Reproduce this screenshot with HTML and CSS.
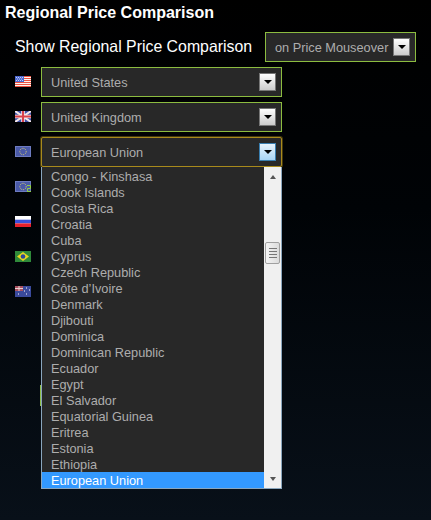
FILE: index.html
```html
<!DOCTYPE html>
<html lang="en">
<head>
    <meta charset="UTF-8">
    <title>Regional Price Comparison</title>
    <link rel="stylesheet" href="styles.css">
</head>
<body>
    <h1>Regional Price Comparison</h1>

    <div class="show-row">
        <span class="show-label">Show Regional Price Comparison</span>
        <div class="select select-mode">
            <span>on Price Mouseover</span>
            <span class="arrow-btn"><span class="arrow"></span></span>
        </div>
    </div>

    <div class="regions">
        <div class="region">
            <svg class="flag" viewBox="0 0 16 11">
                <rect width="16" height="11" fill="#fff4ee"/>
                <path d="M0 .5h16M0 2.500h16M0 4.500h16M0 6.500h16M0 8.500h16M0 10.500h16" stroke="#ee5240"/>
                <rect width="9" height="6" fill="#4c68d0"/>
                <path d="M1 1.500h1M3 1.500h1M5 1.500h1M7 1.500h1M2 3h1M4 3h1M6 3h1M1 4.500h1M3 4.500h1M5 4.500h1M7 4.500h1" stroke="#e6ecff" stroke-width=".8"/>
            </svg>
            <div class="select">
                <span>United States</span>
                <span class="arrow-btn"><span class="arrow"></span></span>
            </div>
        </div>
        <div class="region">
            <svg class="flag" viewBox="0 0 16 11">
                <rect width="16" height="11" fill="#3f4fa8"/>
                <path d="M0 0l16 11M16 0L0 11" stroke="#f4e6e6" stroke-width="2"/>
                <path d="M8 0v11M0 5.500h16" stroke="#f4e6e6" stroke-width="3.600"/>
                <path d="M8 0v11M0 5.500h16" stroke="#d8404a" stroke-width="2"/>
            </svg>
            <div class="select">
                <span>United Kingdom</span>
                <span class="arrow-btn"><span class="arrow"></span></span>
            </div>
        </div>
        <div class="region">
            <svg class="flag" viewBox="0 0 16 11">
                <rect width="16" height="11" fill="#4a5aa8"/>
                <rect x=".5" y=".5" width="15" height="10" fill="none" stroke="#6d7bc0"/>
                <circle cx="8" cy="5.500" r="3.200" fill="none" stroke="#d8d070" stroke-dasharray="1 .9"/>
            </svg>
            <div class="select select-open">
                <span>European Union</span>
                <span class="arrow-btn arrow-btn-open"><span class="arrow"></span></span>
            </div>
        </div>
        <div class="region">
            <svg class="flag" viewBox="0 0 16 11">
                <rect width="16" height="11" fill="#4a5aa8"/>
                <rect x=".5" y=".5" width="15" height="10" fill="none" stroke="#6d7bc0"/>
                <circle cx="8" cy="5.500" r="3.200" fill="none" stroke="#d8d070" stroke-dasharray="1 .9"/>
                <path d="M12 4.500h3.500v3h-3v3h3.500" fill="none" stroke="#8fd040"/>
            </svg>
        </div>
        <div class="region">
            <svg class="flag" viewBox="0 0 16 11">
                <rect width="16" height="11" fill="#fff"/>
                <rect y="3.700" width="16" height="3.700" fill="#3a50d8"/>
                <rect y="7.400" width="16" height="3.600" fill="#e8202a"/>
            </svg>
        </div>
        <div class="region">
            <svg class="flag" viewBox="0 0 16 11">
                <rect width="16" height="11" fill="#2f8a3a"/>
                <path d="M8 1l6 4.500-6 4.500-6-4.500z" fill="#e8d820"/>
                <circle cx="8" cy="5.500" r="2.300" fill="#2c4a9a"/>
            </svg>
        </div>
        <div class="region">
            <svg class="flag" viewBox="0 0 16 11">
                <rect width="16" height="11" fill="#3a4a9c"/>
                <rect width="8" height="5" fill="#a85060"/>
                <path d="M0 2.500h8M4 0v5" stroke="#e8d0d0"/>
                <path d="M3 8h1M11 2h1M14 4h1M11 8h1M9 5h1" stroke="#fff"/>
            </svg>
        </div>
    </div>
    <div class="apply-edge"></div>

    <div class="dropdown">
        <ul class="options">
            <li>Congo - Kinshasa</li>
            <li>Cook Islands</li>
            <li>Costa Rica</li>
            <li>Croatia</li>
            <li>Cuba</li>
            <li>Cyprus</li>
            <li>Czech Republic</li>
            <li>Côte d’Ivoire</li>
            <li>Denmark</li>
            <li>Djibouti</li>
            <li>Dominica</li>
            <li>Dominican Republic</li>
            <li>Ecuador</li>
            <li>Egypt</li>
            <li>El Salvador</li>
            <li>Equatorial Guinea</li>
            <li>Eritrea</li>
            <li>Estonia</li>
            <li>Ethiopia</li>
            <li class="selected">European Union</li>
        </ul>
        <div class="scrollbar">
            <span class="scroll-up"></span>
            <div class="scroll-thumb">
                <span></span><span></span><span></span><span></span>
            </div>
            <span class="scroll-down"></span>
        </div>
    </div>
</body>
</html>
```

FILE: styles.css
```css
html {
    height: 100%;
    background: linear-gradient(#000000, #000306 40%, #081019);
}
body {
    margin: 0;
    position: relative;
    height: 520px;
    overflow: hidden;
    font-family: "Liberation Sans", Arial, sans-serif;
}
h1 {
    margin: 0;
    padding: 4px 0 0 5px;
    height: 28px;
    box-sizing: border-box;
    font-size: 16px;
    line-height: 17px;
    font-weight: bold;
    color: #fff;
}
.show-row {
    display: flex;
    align-items: center;
    padding-left: 15px;
    height: 30px;
    margin-top: 4px;
}
.show-label {
    width: 250px;
    font-size: 15.870px;
    color: #fff;
}
.select {
    display: flex;
    align-items: center;
    justify-content: space-between;
    box-sizing: border-box;
    width: 241px;
    height: 30px;
    padding: 0 5px 0 9px;
    background: #282828;
    border: 1px solid #8cbc40;
    font-size: 12.750px;
    color: #adadad;
}
.select > span:first-child {
    padding-top: 1px;
}
.select-mode {
    width: 151px;
}
.select-open {
    border-color: #a88a1c;
    border-radius: 2px;
    box-shadow: 0 0 0 1px rgba(168, 138, 28, 0.4);
}
.arrow-btn {
    display: flex;
    align-items: center;
    justify-content: center;
    box-sizing: border-box;
    width: 17px;
    height: 18px;
    border: 1px solid #777;
    background: linear-gradient(#fff, #ccc);
}
.arrow-btn-open {
    border-color: #3a7fb0;
    background: linear-gradient(#e8f4fc, #a8d4f4);
}
.arrow {
    border-left: 4px solid transparent;
    border-right: 4px solid transparent;
    border-top: 4px solid #000;
}
.regions {
    display: flex;
    flex-direction: column;
    gap: 5px;
    margin-top: 5px;
    padding-left: 15px;
}
.region {
    display: flex;
    align-items: center;
    gap: 10px;
    height: 30px;
}
.flag {
    width: 16px;
    height: 11px;
    margin-bottom: 1px;
    flex: none;
}
.apply-edge {
    width: 1px;
    height: 21px;
    margin: 78px 0 0 40px;
    background: #8fc04a;
}
.dropdown {
    position: absolute;
    left: 41px;
    top: 167px;
    display: flex;
    box-sizing: border-box;
    width: 241px;
    height: 322px;
    padding-top: 1px;
    border: 1px solid #8aa6bd;
    border-top: 0;
    background: #282828;
}
.options {
    flex: 1;
    margin: 0;
    padding: 0;
    list-style: none;
    font-size: 12.750px;
    line-height: 17px;
    color: #adadad;
}
.options li {
    height: 16px;
    padding-left: 9px;
}
.options .selected {
    background: #3399ff;
    color: #fff;
}
.scrollbar {
    position: relative;
    width: 17px;
    margin-top: -1px;
    background: #f0f0f0;
}
.scroll-up,
.scroll-down {
    position: absolute;
    left: 6px;
    border-left: 3.500px solid transparent;
    border-right: 3.500px solid transparent;
}
.scroll-up {
    top: 8px;
    border-bottom: 4px solid #555;
}
.scroll-down {
    bottom: 7px;
    border-top: 4px solid #555;
}
.scroll-thumb {
    position: absolute;
    left: 1px;
    top: 75px;
    box-sizing: border-box;
    display: flex;
    flex-direction: column;
    align-items: center;
    justify-content: center;
    gap: 2px;
    width: 15px;
    height: 22px;
    border: 1px solid #a0a0a0;
    border-radius: 2px;
    background: linear-gradient(90deg, #f4f4f4, #dcdcdc);
}
.scroll-thumb span {
    width: 8px;
    height: 1px;
    background: #777;
}
```
